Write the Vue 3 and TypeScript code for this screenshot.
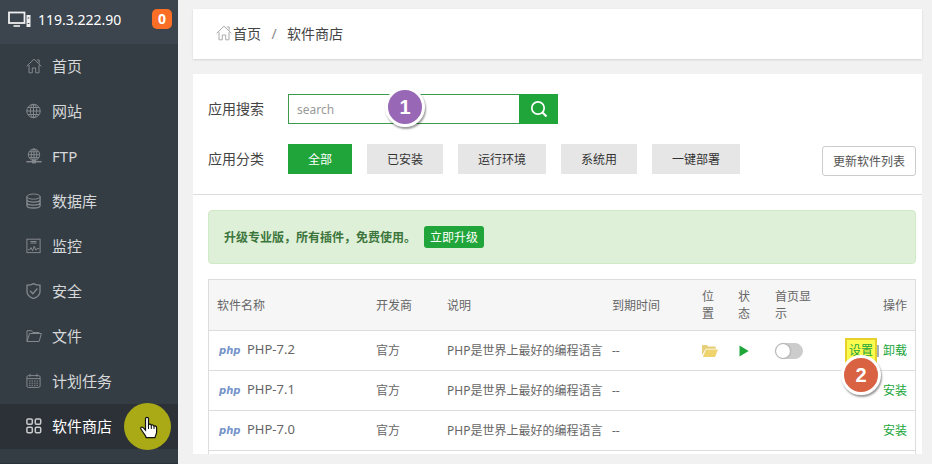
<script setup lang="ts">
import { ref } from 'vue'

interface NavItem {
  id: string
  label: string
}

interface Software {
  name: string
  vendor: string
  description: string
  expires: string
  installed: boolean
}

const navItems: NavItem[] = [
  { id: 'home', label: '首页' },
  { id: 'site', label: '网站' },
  { id: 'ftp', label: 'FTP' },
  { id: 'database', label: '数据库' },
  { id: 'monitor', label: '监控' },
  { id: 'security', label: '安全' },
  { id: 'files', label: '文件' },
  { id: 'cron', label: '计划任务' },
  { id: 'store', label: '软件商店' },
]

const categories: string[] = ['全部', '已安装', '运行环境', '系统用', '一键部署']

const software: Software[] = ['7.2', '7.1', '7.0'].map((version, index) => ({
  name: `PHP-${version}`,
  vendor: '官方',
  description: 'PHP是世界上最好的编程语言',
  expires: '--',
  installed: index === 0,
}))

const activeNav = ref('store')
const activeCategory = ref('全部')
const keyword = ref('')
const showOnHome = ref(false)
</script>

<template>
  <div class="layout">
    <aside class="sidebar">
      <header class="server">
        <svg class="server-icon" viewBox="0 0 23 17" fill="none" stroke="currentColor">
          <rect x="1" y="1.5" width="15.5" height="10.5" stroke-width="1.8" />
          <path d="M5.5 15h6.5" stroke-width="1.6" />
          <path d="M18.5 4h4v12h-4z" fill="currentColor" stroke="none" />
          <path d="M19.7 7h1.6M19.7 12.5h1.6" stroke="#3c444d" />
        </svg>
        <span class="server-ip">119.3.222.90</span>
        <span class="server-count">0</span>
      </header>
      <nav>
        <a
          v-for="item in navItems"
          :key="item.id"
          href="#"
          class="nav-link"
          :class="{ active: item.id === activeNav }"
          @click.prevent="activeNav = item.id"
        >
          <svg class="nav-icon" viewBox="0 0 16 16" fill="none" stroke="currentColor">
            <path
              v-if="item.id === 'home'"
              d="M.6 8.3 8 1.2l7.4 7.1M3 7v7.8h3.3V10h3.4v4.8H13V7M10.8 2h2.4v3.4"
            />
            <template v-else-if="item.id === 'site'">
              <circle cx="7.5" cy="8" r="6.7" />
              <ellipse cx="7.5" cy="8" rx="3.2" ry="6.7" />
              <path d="M7.5 1.3v13.4M.8 8h13.4M2 4.5h11M2 11.5h11" />
            </template>
            <template v-else-if="item.id === 'ftp'">
              <circle cx="8" cy="6.7" r="5.7" />
              <ellipse cx="8" cy="6.7" rx="2.8" ry="5.7" />
              <path d="M8 1v11.4M2.3 6.7h11.4M3.2 3.8h9.6M3.2 9.6h9.6" />
              <path d="M.3 13.7h15.4" stroke-width="1.5" />
              <rect x="6.5" y="12.5" width="3" height="2.4" fill="currentColor" />
            </template>
            <template v-else-if="item.id === 'database'">
              <ellipse cx="7.5" cy="3.6" rx="6.6" ry="2.6" />
              <path
                stroke-width="1.3"
                d="M.9 3.6v8.8c0 1.5 3 2.6 6.6 2.6s6.6-1.1 6.6-2.6V3.6M.9 6.6c0 1.5 3 2.6 6.6 2.6s6.6-1.1 6.6-2.6M.9 9.5c0 1.5 3 2.6 6.6 2.6s6.6-1.1 6.6-2.6"
              />
            </template>
            <template v-else-if="item.id === 'monitor'">
              <rect x=".9" y="1.2" width="13.2" height="13.4" />
              <path d="M2 11.7h1.8L5 9.6l1.6 3.2 1.6-4.6 1.7 4 1.2-1.6h2.2M4.5 3.5h6M4.5 5h6" />
            </template>
            <path
              v-else-if="item.id === 'security'"
              stroke-width="1.3"
              d="M7.5.6C5.6 1.8 3.4 2.2 1 2.2v6.5c0 3 2.6 5.2 6.5 7 3.9-1.8 6.5-4 6.5-7V2.2c-2.4 0-4.6-.4-6.5-1.6zM4 7.8l2.8 2.9 4.6-5.2"
            />
            <path
              v-else-if="item.id === 'files'"
              d="M1 13.5V2.7h4.6l1.2 1.8h6.3v1M1 13.5 3.6 5.5h11.8l-2.3 8z"
            />
            <template v-else-if="item.id === 'cron'">
              <rect x=".9" y="2.6" width="13.2" height="11.8" rx="1.5" />
              <path d="M.9 5.6h13.2M4 .8v3M11 .8v3" />
              <path d="M3 8h9.5M3 10.2h9.5M3 12.3h9.5" stroke-dasharray="1.5 1" />
            </template>
            <g v-else stroke-width="1.5">
              <rect x=".9" y=".9" width="5.4" height="5.4" rx="1.2" />
              <rect x="9.3" y=".9" width="5.4" height="5.4" rx="1.2" />
              <rect x=".9" y="9.3" width="5.4" height="5.4" rx="1.2" />
              <rect x="9.3" y="9.3" width="5.4" height="5.4" rx="1.2" />
            </g>
          </svg>
          <span>{{ item.label }}</span>
          <span v-if="item.id === 'store'" class="pointer-halo">
            <svg class="pointer" viewBox="0 0 18 24">
              <path
                d="M5.5 2.8C5.5 1 8.5 1 8.5 2.8v6c.6-1 2.6-.8 2.8.6.8-.9 2.5-.5 2.7.8 1-.7 2.6 0 2.6 1.5v4.6c0 2-1.3 3.2-1.6 5.4H6.2c-.4-2.2-2-3.6-3.2-5.5L.9 13c-.8-1.5 1.2-2.6 2.3-1.3l2.3 2.5z"
                fill="#fff"
                stroke="#111"
                stroke-width="1.2"
              />
              <path d="M8.5 9v4M11.3 9.6V13M14 10.4V13" stroke="#111" fill="none" />
            </svg>
          </span>
        </a>
      </nav>
    </aside>

    <main class="main">
      <nav class="breadcrumb">
        <svg class="crumb-icon" viewBox="0 0 16 16" fill="none" stroke="currentColor">
          <path d="M.6 8.3 8 1.2l7.4 7.1M3 7v7.8h3.3V10h3.4v4.8H13V7M10.8 2h2.4v3.4" />
        </svg>
        <a href="#">首页</a>
        <span class="crumb-sep">/</span>
        <span>软件商店</span>
      </nav>

      <section class="panel">
        <div class="filters">
          <form class="field" @submit.prevent>
            <label for="keyword" class="field-label">应用搜索</label>
            <div class="search">
              <input id="keyword" v-model="keyword" type="text" placeholder="search" />
              <button type="submit" aria-label="应用搜索">
                <svg viewBox="0 0 18 18" fill="none" stroke="currentColor">
                  <circle cx="8" cy="8" r="6.2" stroke-width="1.7" />
                  <path d="m12.5 12.5 4 4" stroke-width="2.2" />
                </svg>
              </button>
              <span class="step step-search">1</span>
            </div>
          </form>
          <div class="field">
            <span class="field-label">应用分类</span>
            <div class="categories">
              <button
                v-for="category in categories"
                :key="category"
                type="button"
                :class="{ active: category === activeCategory }"
                @click="activeCategory = category"
              >
                {{ category }}
              </button>
            </div>
            <button type="button" class="refresh">更新软件列表</button>
          </div>
        </div>

        <div class="content">
          <div class="notice">
            <strong>升级专业版，所有插件，免费使用。</strong>
            <button type="button">立即升级</button>
          </div>

          <div class="table-frame">
            <table>
              <colgroup>
                <col />
                <col class="col-vendor" />
                <col class="col-description" />
                <col class="col-expires" />
                <col class="col-location" />
                <col class="col-status" />
                <col class="col-home" />
                <col class="col-actions" />
              </colgroup>
              <thead>
                <tr>
                  <th>软件名称</th>
                  <th>开发商</th>
                  <th>说明</th>
                  <th>到期时间</th>
                  <th>位置</th>
                  <th>状态</th>
                  <th>首页显示</th>
                  <th class="actions">操作</th>
                </tr>
              </thead>
              <tbody>
                <tr v-for="item in software" :key="item.name">
                  <td>
                    <div class="product">
                      <span class="php-logo">php</span>
                      <span class="product-name">{{ item.name }}</span>
                    </div>
                  </td>
                  <td>{{ item.vendor }}</td>
                  <td>{{ item.description }}</td>
                  <td>{{ item.expires }}</td>
                  <td>
                    <svg v-if="item.installed" class="folder" viewBox="0 0 16 12">
                      <path d="M0 10.5V1.2C0 .5.5 0 1.2 0h3.6l1.4 1.6h6.6c.6 0 1 .4 1 1v1.2H3.6z" fill="#e6cf78" />
                      <path d="M3.9 4.6H16l-2.6 6.6c-.2.5-.5.8-1 .8H.9z" fill="#efd36c" />
                    </svg>
                  </td>
                  <td>
                    <svg v-if="item.installed" class="play" viewBox="0 0 10 12">
                      <path d="M.5.5 9.7 6 .5 11.5z" fill="#20a53a" />
                    </svg>
                  </td>
                  <td>
                    <input
                      v-if="item.installed"
                      v-model="showOnHome"
                      class="toggle"
                      type="checkbox"
                      aria-label="首页显示"
                    />
                  </td>
                  <td class="actions">
                    <div v-if="item.installed" class="action-group">
                      <span class="marked">
                        <a href="#">设置</a>
                        <span class="step step-settings">2</span>
                      </span>
                      <span class="action-sep"></span>
                      <a href="#">卸载</a>
                    </div>
                    <a v-else href="#">安装</a>
                  </td>
                </tr>
              </tbody>
            </table>
          </div>
        </div>
      </section>
    </main>
  </div>
</template>

<style>
body {
  background: #f1f1f1;
}
</style>

<style scoped>
.layout,
.layout * {
  box-sizing: border-box;
}

.layout {
  display: flex;
  height: 100vh;
  overflow: hidden;
  color: #444;
  font-family: 'Noto Sans', 'Noto Sans CJK SC', sans-serif;
  font-size: 12px;
  line-height: 17px;
}

a {
  color: inherit;
  text-decoration: none;
}

button,
input {
  font: inherit;
  margin: 0;
}

button {
  border: 0;
  cursor: pointer;
}

svg {
  display: block;
  flex: none;
}

.sidebar {
  flex: none;
  width: 178px;
  background: #353d44;
  border-bottom: 1px solid #2c3138;
}

.server {
  display: flex;
  align-items: center;
  height: 44px;
  padding: 0 6px 6px 8px;
  background: #3c444d;
  color: #fff;
  font-size: 14px;
}

.server-icon {
  width: 23px;
  height: 17px;
  color: #f0f0f0;
}

.server-ip {
  flex: 1;
  margin-left: 7px;
}

.server-count {
  width: 20px;
  border-radius: 5px;
  background: #fa6e26;
  font-weight: 700;
  line-height: 20px;
  text-align: center;
}

.nav-link {
  position: relative;
  display: flex;
  align-items: center;
  gap: 10px;
  height: 45px;
  padding: 0 0 1px 26px;
  color: #d6d8da;
  font-size: 15px;
}

.nav-icon {
  width: 16px;
  height: 16px;
  color: #84898d;
}

.nav-link.active {
  background: #2c3138;
  color: #fff;
}

.nav-link.active .nav-icon {
  color: #c9cbcd;
}

.pointer-halo {
  position: absolute;
  top: -1px;
  right: 7px;
  display: flex;
  align-items: center;
  justify-content: center;
  width: 47px;
  height: 47px;
  padding: 2px 0 0 2px;
  border-radius: 50%;
  background: #a9aa16;
}

.pointer {
  width: 18px;
  height: 24px;
}

.main {
  display: flex;
  flex: 1;
  flex-direction: column;
  gap: 15px;
  min-width: 0;
  padding: 9px 10px 10px 15px;
}

.breadcrumb {
  display: flex;
  flex: none;
  align-items: center;
  height: 50px;
  padding: 0 0 2px 23px;
  background: #fff;
  box-shadow: 0 1px 2px rgba(0, 0, 0, 0.12);
  font-size: 14px;
}

.crumb-icon {
  width: 16px;
  height: 16px;
  margin-right: 1px;
  color: #aaa;
}

.crumb-sep {
  width: 26px;
  color: #888;
  text-align: center;
}

.panel {
  display: flex;
  flex: 1;
  flex-direction: column;
  min-height: 0;
  overflow: hidden;
  background: #fff;
}

.filters {
  display: flex;
  flex-direction: column;
  gap: 20px;
  padding: 20px 6px 20px 15px;
  border-bottom: 1px solid #ddd;
}

.field {
  display: flex;
  align-items: center;
}

.field-label {
  width: 80px;
  padding-bottom: 2px;
  font-size: 14px;
}

.search {
  position: relative;
  display: flex;
  width: 270px;
  height: 30px;
}

.search input {
  flex: 1;
  min-width: 0;
  padding: 0 8px;
  border: 1px solid #3b9a4c;
  border-right: 0;
  border-radius: 0;
  outline: 0;
  color: #444;
}

.search input::placeholder {
  color: #999;
}

.search button {
  display: flex;
  align-items: center;
  justify-content: center;
  width: 39px;
  padding: 0;
  background: #20a53a;
  color: #fff;
}

.search svg {
  width: 18px;
  height: 18px;
}

.step {
  position: absolute;
  width: 40px;
  height: 40px;
  border: 3px solid #fff;
  border-radius: 50%;
  box-shadow: 1px 2px 2px rgba(0, 0, 0, 0.4);
  color: #fff;
  font-family: 'Liberation Sans', sans-serif;
  font-size: 20px;
  font-weight: 700;
  line-height: 34px;
  text-align: center;
}

.step-search {
  top: -7px;
  left: 97px;
  background: #9867b5;
}

.step-settings {
  top: 15px;
  left: -6px;
  background: #d96243;
}

.categories {
  display: flex;
  flex: 1;
  gap: 15px;
}

.categories button {
  height: 30px;
  padding: 0 20px;
  background: #e6e6e6;
  color: #333;
}

.categories .active {
  background: #20a53a;
  color: #fff;
}

.refresh {
  align-self: flex-end;
  height: 30px;
  margin: 2px 0 -2px;
  padding: 0 10px;
  border: 1px solid #ccc;
  border-radius: 3px;
  background: #fff;
  color: #555;
}

.content {
  display: flex;
  flex: 1;
  flex-direction: column;
  gap: 15px;
  min-height: 0;
  padding: 15px 6px 0 15px;
}

.notice {
  display: flex;
  flex: none;
  align-items: center;
  gap: 8px;
  height: 54px;
  padding: 0 15px;
  border: 1px solid #d0e9c6;
  border-radius: 4px;
  background: #dff0d8;
  color: #3c763d;
}

.notice button {
  height: 22px;
  padding: 0 6px;
  border-radius: 3px;
  background: #20a53a;
  color: #fff;
}

.table-frame {
  flex: 1;
  border: 1px solid #ddd;
  border-bottom: 0;
}

table {
  width: 100%;
  border-collapse: separate;
  border-spacing: 0;
  table-layout: fixed;
  color: #666;
}

.col-vendor {
  width: 71px;
}

.col-description {
  width: 165px;
}

.col-expires {
  width: 90px;
}

.col-location {
  width: 36px;
}

.col-status {
  width: 37px;
}

.col-home {
  width: 56px;
}

.col-actions {
  width: 92px;
}

th,
td {
  padding: 0 8px;
  border-bottom: 1px solid #ddd;
  text-align: left;
  white-space: nowrap;
}

th {
  height: 51px;
  background: #f6f6f6;
  font-weight: 400;
  white-space: normal;
}

td {
  height: 40px;
}

.product {
  display: flex;
  align-items: center;
  gap: 6px;
}

.product-name {
  padding-bottom: 2px;
  font-size: 13px;
}

.php-logo {
  width: 24px;
  padding-left: 2px;
  color: #7393c9;
  font-family: 'DejaVu Sans', sans-serif;
  font-size: 10px;
  font-style: italic;
  font-weight: 700;
}

.folder {
  width: 16px;
  height: 12px;
}

.play {
  width: 10px;
  height: 12px;
  margin-left: 1px;
}

.toggle {
  display: block;
  width: 28px;
  height: 16px;
  border: 1px solid #ccc;
  border-radius: 8px;
  appearance: none;
  background: #ccc;
  cursor: pointer;
}

.toggle::before {
  display: block;
  width: 14px;
  height: 14px;
  border-radius: 50%;
  background: #fff;
  box-shadow: 0 0 2px #777;
  content: '';
}

.toggle:checked {
  background: #20a53a;
}

.toggle:checked::before {
  margin-left: 12px;
}

td.actions {
  color: #20a53a;
}

.actions {
  text-align: right;
}

.action-group {
  display: flex;
  align-items: center;
  justify-content: flex-end;
}

.marked {
  position: relative;
  padding: 2px;
  border: 2px solid #e8d02c;
  background: #fbfb4e;
}

.action-sep {
  width: 2px;
  height: 12px;
  margin-right: 4px;
  background: #a3b0b8;
}
</style>
